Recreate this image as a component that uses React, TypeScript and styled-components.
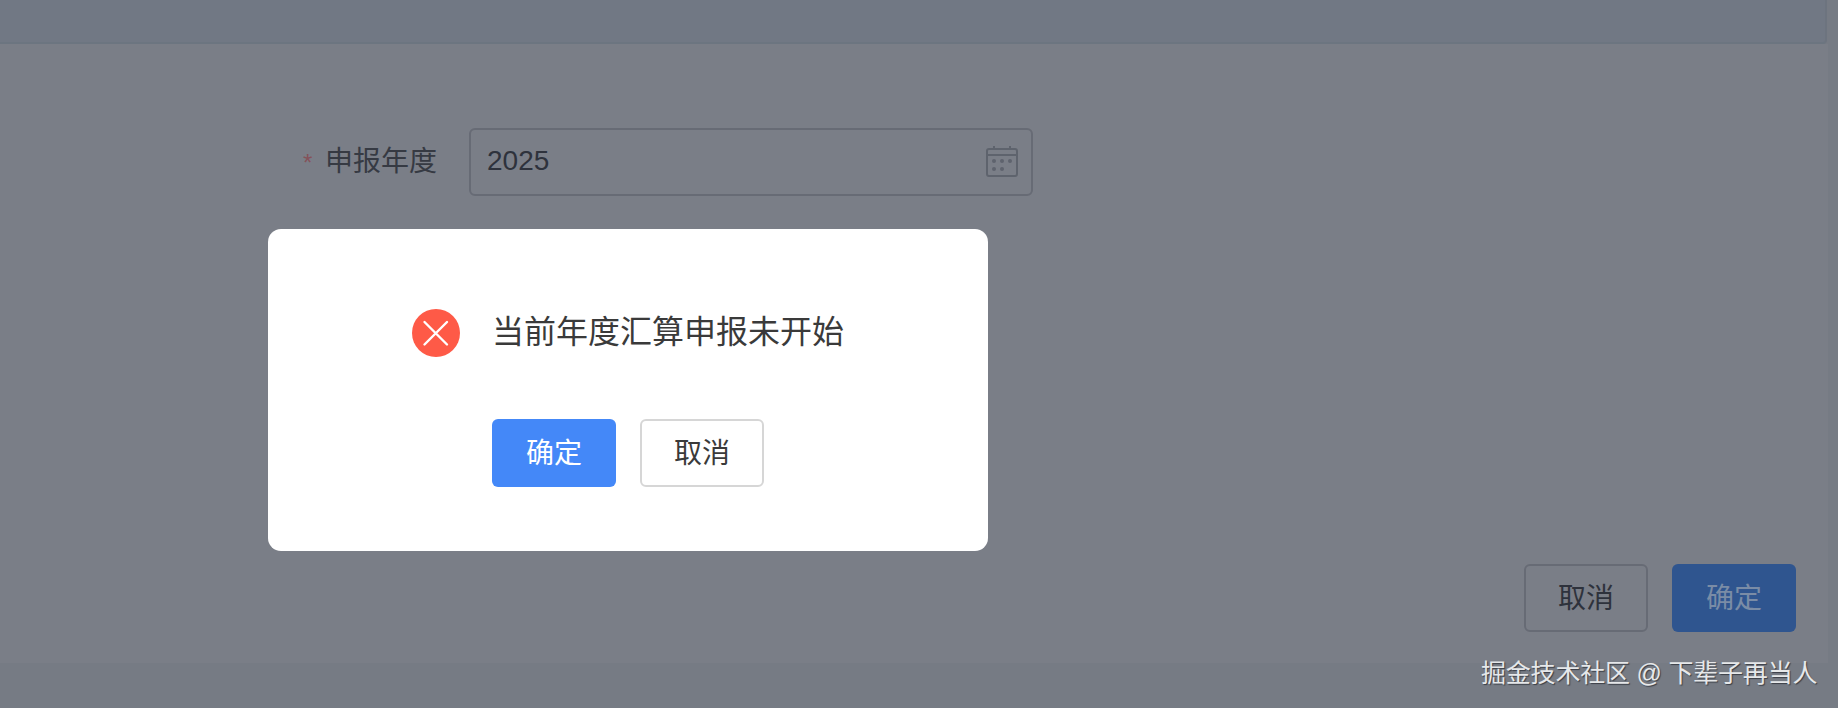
import React from 'react';
import styled, { createGlobalStyle } from 'styled-components';

const GlobalStyle = createGlobalStyle`
  html,
  body {
    margin: 0;
    padding: 0;
    background: #767b84;
  }
  * {
    box-sizing: border-box;
  }
`;

const FONT = `"Liberation Sans", "Noto Sans CJK SC", sans-serif`;

const Page = styled.div`
  position: relative;
  width: 1838px;
  height: 708px;
  overflow: hidden;
  display: flex;
  flex-direction: column;
  font-family: ${FONT};
  background: #767b84;
`;

const TopPanel = styled.div`
  flex: none;
  width: 1827px;
  height: 44px;
  background: #717884;
  border-right: 2px solid #6d747f;
  border-bottom: 2px solid #6c7580;
  border-bottom-right-radius: 4px;
`;

const Content = styled.section`
  flex: none;
  width: 1828px;
  height: 619px;
  padding: 84px 32px 0 303px;
  display: flex;
  flex-direction: column;
  background: #7a7e87;
`;

const FormRow = styled.div`
  display: flex;
  align-items: center;
`;

const Required = styled.span`
  width: 22px;
  font-size: 24px;
  line-height: 1;
  color: #85525a;
  padding-top: 2px;
`;

const Label = styled.label`
  width: 144px;
  font-size: 28px;
  line-height: 40px;
  color: #363a43;
`;

const DateField = styled.div`
  width: 564px;
  height: 68px;
  padding: 0 13px 2px 16px;
  display: flex;
  align-items: center;
  justify-content: space-between;
  border: 2px solid #676b75;
  border-radius: 6px;
`;

const DateValue = styled.span`
  font-size: 28px;
  color: #2e323c;
`;

const Actions = styled.div`
  margin-top: 368px;
  display: flex;
  justify-content: flex-end;
  gap: 24px;
`;

const Button = styled.button<{ $primary?: boolean; $dim?: boolean }>`
  width: 124px;
  height: 68px;
  padding: 0 0 4px;
  border-radius: 6px;
  font-family: ${FONT};
  font-size: 28px;
  ${({ $primary, $dim }) => {
    if ($primary && $dim) return 'background: #2f558f; border: 0; color: #7a8ca6;';
    if ($primary) return 'background: #4488f8; border: 0; color: #ffffff;';
    if ($dim) return 'background: transparent; border: 2px solid #676b75; color: #2e323c;';
    return 'background: #ffffff; border: 2px solid #d6d6d6; color: #3a3a3a;';
  }}
`;

const Dialog = styled.div`
  position: absolute;
  left: 268px;
  top: 229px;
  width: 720px;
  height: 322px;
  padding: 80px 0 0 144px;
  background: #ffffff;
  border-radius: 13px;
`;

const Message = styled.div`
  display: flex;
  align-items: center;
  gap: 32px;
`;

const MessageText = styled.span`
  font-size: 32px;
  line-height: 46px;
  padding-bottom: 2px;
  color: #3a3a3a;
`;

const DialogActions = styled.div`
  margin: 62px 0 0 80px;
  display: flex;
  gap: 24px;
`;

const Watermark = styled.div`
  position: absolute;
  left: 1481px;
  top: 656px;
  font-size: 25px;
  line-height: 34px;
  letter-spacing: -0.2px;
  white-space: nowrap;
  color: #e6e8ea;
  text-shadow: 1px 1px 1px #3a3e46;
`;

const ErrorIcon = () => (
  <svg width="48" height="48" viewBox="0 0 48 48" aria-hidden="true">
    <circle cx="24" cy="24" r="24" fill="#fe5a47" />
    <path d="M12.5 13 35 35.5M35 13 12.5 35.5" stroke="#fff" strokeWidth="2.4" strokeLinecap="round" />
  </svg>
);

const CalendarIcon = () => (
  <svg width="32" height="32" viewBox="0 0 32 32" fill="none" aria-hidden="true">
    <rect x="1" y="4" width="30" height="27" rx="2" stroke="#5e636d" strokeWidth="2" />
    <path d="M1 10h30M8 1v4M24 1v4" stroke="#5e636d" strokeWidth="2" />
    <g fill="#5e636d">
      <circle cx="8" cy="16" r="2" />
      <circle cx="16" cy="16" r="2" />
      <circle cx="24" cy="16" r="2" />
      <circle cx="8" cy="24" r="2" />
      <circle cx="16" cy="24" r="2" />
    </g>
  </svg>
);

const App = () => {
  return (
    <Page>
      <GlobalStyle />
      <TopPanel />
      <Content>
        <FormRow>
          <Required>*</Required>
          <Label>申报年度</Label>
          <DateField>
            <DateValue>2025</DateValue>
            <CalendarIcon />
          </DateField>
        </FormRow>
        <Actions>
          <Button $dim>取消</Button>
          <Button $dim $primary>
            确定
          </Button>
        </Actions>
      </Content>
      <Dialog>
        <Message>
          <ErrorIcon />
          <MessageText>当前年度汇算申报未开始</MessageText>
        </Message>
        <DialogActions>
          <Button $primary>确定</Button>
          <Button>取消</Button>
        </DialogActions>
      </Dialog>
      <Watermark>掘金技术社区 @ 下辈子再当人</Watermark>
    </Page>
  );
};

export default App;
